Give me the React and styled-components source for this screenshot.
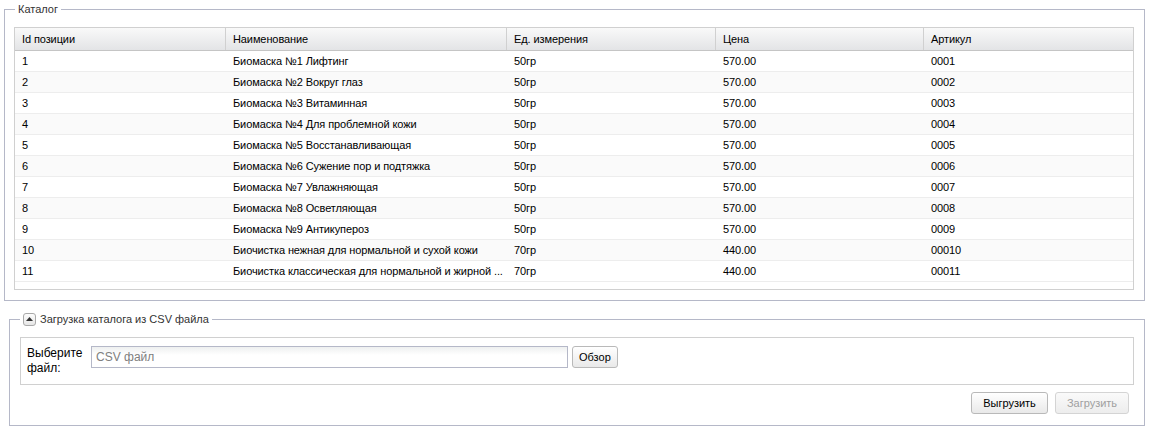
import React from 'react'
import styled, { createGlobalStyle } from 'styled-components'

const GlobalStyle = createGlobalStyle`
  html, body {
    margin: 0;
    padding: 0;
    background: #fff;
    font-family: "Liberation Sans", Arial, sans-serif;
    font-size: 11px;
    color: #000;
  }
`

const Page = styled.div`
  width: 1150px;
  padding: 2px 0 0 0;
  display: flex;
  flex-direction: column;
`

const FieldSet = styled.fieldset`
  margin: ${p => p.$margin};
  padding: ${p => p.$padding};
  border: 1px solid #b5b8c8;
  min-width: 0;
`

const Legend = styled.legend`
  display: flex;
  align-items: center;
  gap: 4px;
  padding: 0 3px 0 3px;
  margin-left: ${p => p.$offset || 0}px;
  height: 14px;
  line-height: 14px;
  font-size: 11px;
  color: #333;
`

const Toggle = styled.span`
  width: 13px;
  height: 13px;
  box-sizing: border-box;
  border: 1px solid #a9a9a9;
  border-radius: 3px;
  background: linear-gradient(#fdfdfd, #e6e6e6);
  display: flex;
  align-items: center;
  justify-content: center;
`

const Grid = styled.div`
  border: 1px solid #d0d0d0;
  background: #fff;
  padding-bottom: 7px;
`

const Row = styled.div`
  display: grid;
  grid-template-columns: 211px 281px 209px 208px 1fr;
  height: ${p => (p.$head ? 22 : 20)}px;
  background: ${p =>
    p.$head ? 'linear-gradient(#f9f9f9, #e3e4e6)' : p.$alt ? '#fafafa' : '#fff'};
  border-bottom: 1px solid ${p => (p.$head ? '#c5c5c5' : '#ededed')};
`

const Cell = styled.div`
  padding: 0 0 0 7px;
  line-height: ${p => (p.$head ? 22 : 20)}px;
  letter-spacing: -0.1px;
  white-space: nowrap;
  overflow: hidden;
  text-overflow: ellipsis;
  color: #000;
  border-right: ${p => (p.$head ? '1px solid #d0d0d0' : 'none')};
  &:last-child {
    border-right: none;
  }
`

const Panel = styled.div`
  border: 1px solid #d0d0d0;
  padding: 8px 6px 8px 6px;
  display: flex;
  align-items: flex-start;
  gap: 10px;
`

const Label = styled.label`
  width: 54px;
  font-size: 12px;
  line-height: 15px;
  color: #000;
`

const FileRow = styled.div`
  display: flex;
  gap: 4px;
`

const Input = styled.input`
  width: 477px;
  height: 22px;
  box-sizing: border-box;
  border: 1px solid #b5b8c8;
  background: linear-gradient(#eef0f0, #fff 40%);
  padding: 0 4px;
  font-family: "Liberation Sans", Arial, sans-serif;
  font-size: 12px;
  outline: none;
  &::placeholder {
    color: #808080;
  }
`

const Button = styled.button`
  height: 22px;
  min-width: ${p => p.$w || 0}px;
  box-sizing: border-box;
  padding: 0 6px;
  border: 1px solid ${p => (p.disabled ? '#d4d4d4' : '#b9b9b9')};
  border-radius: 3px;
  background: ${p => (p.disabled ? 'linear-gradient(#fafafa, #ededed)' : 'linear-gradient(#ffffff, #e9e9e9)')};
  font-family: "Liberation Sans", Arial, sans-serif;
  font-size: 11px;
  color: ${p => (p.disabled ? '#a0a0a0' : '#000')};
`

const Actions = styled.div`
  display: flex;
  justify-content: flex-end;
  gap: 7px;
  padding: 7px 5px 0 0;
`

const rows = [
  ['1', 'Биомаска №1 Лифтинг', '50гр', '570.00', '0001'],
  ['2', 'Биомаска №2 Вокруг глаз', '50гр', '570.00', '0002'],
  ['3', 'Биомаска №3 Витаминная', '50гр', '570.00', '0003'],
  ['4', 'Биомаска №4 Для проблемной кожи', '50гр', '570.00', '0004'],
  ['5', 'Биомаска №5 Восстанавливающая', '50гр', '570.00', '0005'],
  ['6', 'Биомаска №6 Сужение пор и подтяжка', '50гр', '570.00', '0006'],
  ['7', 'Биомаска №7 Увлажняющая', '50гр', '570.00', '0007'],
  ['8', 'Биомаска №8 Осветляющая', '50гр', '570.00', '0008'],
  ['9', 'Биомаска №9 Антикупероз', '50гр', '570.00', '0009'],
  ['10', 'Биочистка нежная для нормальной и сухой кожи', '70гр', '440.00', '00010'],
  ['11', 'Биочистка классическая для нормальной и жирной ...', '70гр', '440.00', '00011'],
]

const headers = ['Id позиции', 'Наименование', 'Ед. измерения', 'Цена', 'Артикул']

const App = () => {
  return (
    <Page>
      <GlobalStyle />
      <FieldSet $margin="0 5px 0 4px" $padding="11px 10px 10px 9px">
        <Legend $offset={1}>Каталог</Legend>
        <Grid>
          <Row $head>
            {headers.map(h => (
              <Cell $head key={h}>{h}</Cell>
            ))}
          </Row>
          {rows.map((r, i) => (
            <Row key={r[0]} $alt={i % 2 === 1}>
              {r.map((c, j) => (
                <Cell key={j}>{c}</Cell>
              ))}
            </Row>
          ))}
        </Grid>
      </FieldSet>
      <FieldSet $margin="11px 5px 0 9px" $padding="11px 10px 11px 10px">
        <Legend $offset={0}>
          <Toggle>
            <svg width="7" height="4" viewBox="0 0 7 4">
              <path d="M0 4 L3.5 0 L7 4 Z" fill="#333" />
            </svg>
          </Toggle>
          Загрузка каталога из CSV файла
        </Legend>
        <Panel>
          <Label>Выберите файл:</Label>
          <FileRow>
            <Input placeholder="CSV файл" readOnly />
            <Button $w={45}>Обзор</Button>
          </FileRow>
        </Panel>
        <Actions>
          <Button $w={77}>Выгрузить</Button>
          <Button $w={74} disabled>Загрузить</Button>
        </Actions>
      </FieldSet>
    </Page>
  )
}

export default App
